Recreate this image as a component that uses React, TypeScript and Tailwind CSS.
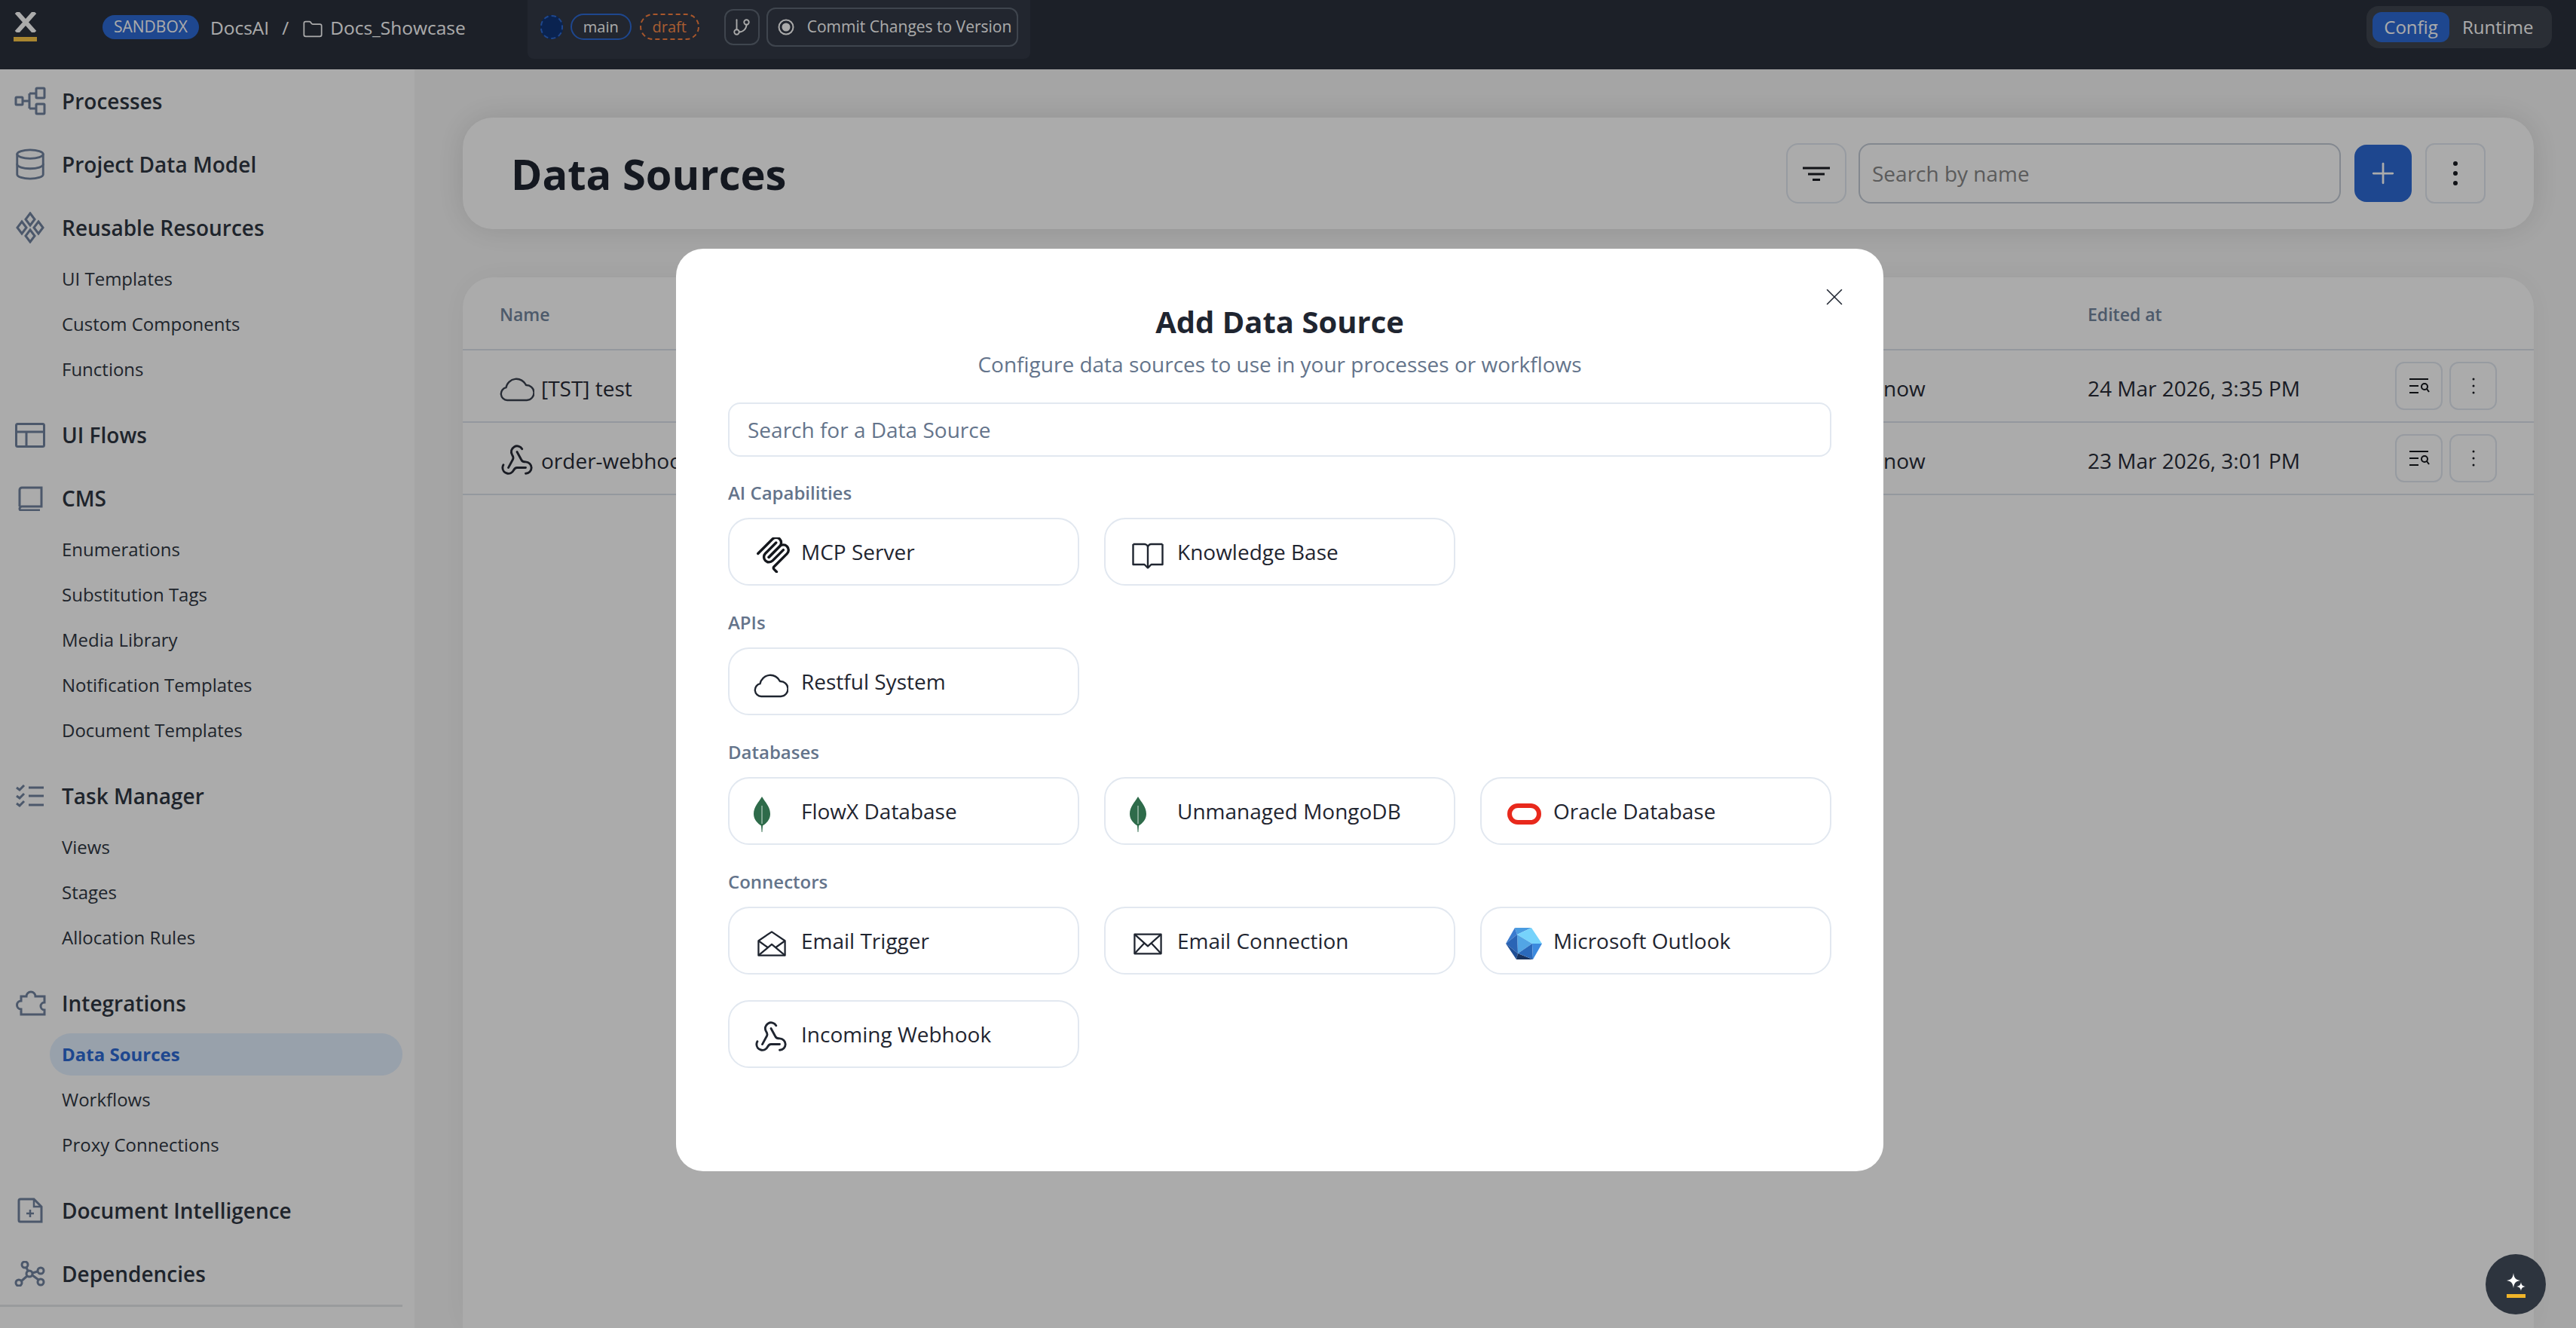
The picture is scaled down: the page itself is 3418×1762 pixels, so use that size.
import { Database, Folder, GitBranch, Plus, Webhook, X } from 'lucide-react';
import type { ReactNode } from 'react';

const navIcon = 'text-[#7284a0]';

function ProcessesIcon() {
  return (
    <svg width="42" height="38" viewBox="0 0 42 38" fill="none" stroke="currentColor" strokeWidth="3">
      <rect x="2" y="14" width="9" height="10" rx="1" />
      <rect x="29" y="2" width="11" height="13" rx="1" />
      <rect x="29" y="23" width="11" height="13" rx="1" />
      <path d="M11 19h9M20 9v20M20 9h9M20 29h9" />
    </svg>
  );
}

function ResourcesIcon() {
  return (
    <svg width="42" height="42" viewBox="0 0 42 42" fill="none" stroke="currentColor" strokeWidth="3">
      <path d="M21 2l6 8-6 8-6-8z" />
      <path d="M21 24l6 8-6 8-6-8z" />
      <path d="M10 13l6 8-6 8-6-8z" />
      <path d="M32 13l6 8-6 8-6-8z" />
    </svg>
  );
}

function LayoutIcon() {
  return (
    <svg width="40" height="33" viewBox="0 0 40 33" fill="none" stroke="currentColor" strokeWidth="3">
      <rect x="1.5" y="1.5" width="37" height="30" rx="2" />
      <path d="M1.5 12h37M15 12v19" />
    </svg>
  );
}

function BookIcon() {
  return (
    <svg width="34" height="33" viewBox="0 0 34 33" fill="none" stroke="currentColor" strokeWidth="3">
      <path d="M3 27V5a3 3 0 0 1 3-3h26v25H6a3 3 0 0 0-3 3 2 2 0 0 0 2 2h25" />
    </svg>
  );
}

function TasksIcon() {
  return (
    <svg width="38" height="30" viewBox="0 0 38 30" fill="none" stroke="currentColor" strokeWidth="3">
      <path d="M1 4l4 3 6-6M1 15l4 3 6-6M1 25l4 3 6-6" />
      <path d="M17 4h20M17 15h20M17 27h20" />
    </svg>
  );
}

function PuzzleIcon() {
  return (
    <svg width="42" height="34" viewBox="0 0 42 34" fill="none" stroke="currentColor" strokeWidth="3">
      <path d="M9 32h31v-6a5 5 0 0 1 0-10V8H28a6 6 0 1 0-12 0H9v6a5.5 5.5 0 0 0 0 11z" />
    </svg>
  );
}

function DocPlusIcon() {
  return (
    <svg width="34" height="34" viewBox="0 0 34 34" fill="none" stroke="currentColor" strokeWidth="3">
      <path d="M4 2h18l10 10v20H4a2 2 0 0 1-2-2V4a2 2 0 0 1 2-2z" />
      <path d="M22 2v10h10M17 16v10M12 21h10" strokeWidth="2.5" />
    </svg>
  );
}

function NetworkIcon() {
  return (
    <svg width="42" height="34" viewBox="0 0 42 34" fill="none" stroke="currentColor" strokeWidth="3">
      <circle cx="14" cy="5" r="4" />
      <circle cx="20" cy="17" r="4" />
      <circle cx="35" cy="13" r="4" />
      <circle cx="35" cy="28" r="4" />
      <circle cx="6" cy="29" r="4" />
      <path d="M16 9l2 4M24 16l7-2M24 19l8 6M9 27l8-7" />
    </svg>
  );
}

function CloudIcon({ color }: { color: string }) {
  return (
    <svg width="46" height="35" viewBox="0 0 46 35" fill="none" stroke={color} strokeWidth="2.4" strokeLinejoin="round">
      <path d="M10 33a8.500 8.500 0 0 1-1.500-16.800A14 14 0 0 1 35 13a10 10 0 0 1 1 20z" />
    </svg>
  );
}

function McpIcon() {
  return (
    <svg className="ml-[2px]" width="46" height="47" viewBox="18 22 150 166" fill="none" stroke="#14171c" strokeWidth="12" strokeLinecap="round">
      <path d="M25 97.8528L92.8822 29.9706C102.255 20.598 117.451 20.598 126.823 29.9706C136.196 39.3431 136.196 54.5391 126.823 63.9117L75.5581 115.177" />
      <path d="M76.2652 114.47L126.823 63.9117C136.196 54.5391 151.392 54.5391 160.765 63.9117L161.118 64.2652C170.491 73.6378 170.491 88.8338 161.118 98.2063L99.7248 159.6C96.6006 162.724 96.6006 167.789 99.7248 170.913L112.331 183.52" />
      <path d="M109.853 46.9411L59.6482 97.1457C50.2756 106.518 50.2756 121.714 59.6482 131.087C69.0208 140.459 84.2167 140.459 93.5893 131.087L143.794 80.8822" />
    </svg>
  );
}

function KnowledgeIcon() {
  return (
    <svg className="ml-[3px] mt-[3px]" width="42" height="35" viewBox="0 0 42 35" fill="none" stroke="#1f2530" strokeWidth="2.4" strokeLinejoin="round">
      <path d="M1.5 2h15a4.5 4.5 0 0 1 4.5 4.5V34M40.5 2h-15A4.5 4.5 0 0 0 21 6.5" />
      <path d="M1.5 2v27h15l4.5 4.5 4.5-4.5h15V2" />
    </svg>
  );
}

function LeafIcon() {
  return (
    <svg width="22" height="47" viewBox="0 0 22 47">
      <path d="M11 0C15 7 22 13 22 23c0 8-6 13-10 15.500L11.400 47h-.8L10 38.500C6 36 0 31 0 23 0 13 7 7 11 0z" fill="#2e6b4a" />
      <path d="M11 12v24" stroke="#cfe2d6" strokeWidth="1" />
    </svg>
  );
}

function OracleIcon() {
  return (
    <svg className="ml-[2px]" width="45" height="28" viewBox="0 0 45 28" fill="none">
      <rect x="3" y="3" width="39" height="22" rx="11" stroke="#e8291c" strokeWidth="6" />
    </svg>
  );
}

function OutlookIcon() {
  return (
    <svg width="48" height="42" viewBox="0 0 48 42">
      <polygon points="12,0 34,0 15,9" fill="#4a9be0" />
      <polygon points="34,0 48,21 35,21 15,9" fill="#76d3fb" />
      <polygon points="15,9 35,21 16,34" fill="#52a5e5" />
      <polygon points="12,0 15,9 0,21" fill="#3a7bcf" />
      <polygon points="0,21 15,9 16,34" fill="#2a64b5" />
      <polygon points="0,21 16,34 14,42" fill="#1f4f96" />
      <polygon points="14,42 16,34 36,42" fill="#17325f" />
      <polygon points="16,34 35,21 36,42" fill="#2a69bb" />
      <polygon points="35,21 48,21 36,42" fill="#3c8ade" />
    </svg>
  );
}

function MailOpenIcon() {
  return (
    <svg className="ml-[5px]" width="38" height="36" viewBox="0 0 40 36" fill="none" stroke="#1f2530" strokeWidth="2.4" strokeLinejoin="round">
      <path d="M1.500 14L20 1.500 38.500 14v20.500h-37z" />
      <path d="M1.500 14L14 23M38.500 14L26 23M1.500 34.500L20 19l18.500 15.500" />
    </svg>
  );
}

function MailIcon() {
  return (
    <svg className="ml-[5px]" width="38" height="29" viewBox="0 0 40 30" fill="none" stroke="#1f2530" strokeWidth="2.4" strokeLinejoin="round">
      <rect x="1.500" y="1.500" width="37" height="27" />
      <path d="M1.500 1.500L20 18 38.500 1.500M1.500 28.500L15 14M38.500 28.500L25 14" />
    </svg>
  );
}

function RowSearchIcon() {
  return (
    <svg width="28" height="22" viewBox="0 0 28 22" fill="none" stroke="#14171c" strokeWidth="2">
      <path d="M1 2h25M1 11h12M1 20h12" />
      <circle cx="21" cy="12" r="4" />
      <path d="M24 15l3 4" />
    </svg>
  );
}

function Dots({ r, step }: { r: number; step: number }) {
  return (
    <svg width="12" height="40" viewBox="0 0 12 40" fill="#1a1d23">
      <circle cx="6" cy={20 - step} r={r} />
      <circle cx="6" cy="20" r={r} />
      <circle cx="6" cy={20 + step} r={r} />
    </svg>
  );
}

function Section({ icon, label, items }: { icon: ReactNode; label: string; items?: string[] }) {
  return (
    <div className={items ? 'mb-[3px]' : ''}>
      <div className="flex h-[60px] items-center">
        <div className={`flex w-[82px] shrink-0 justify-center pr-[2px] ${navIcon}`}>{icon}</div>
        <span className="text-[28px] font-semibold text-[#2f3642]">{label}</span>
      </div>
      {items && (
        <div className="mt-2">
          {items.map((item) => (
            <div key={item} className="relative flex h-[60px] items-center pl-[82px]">
              {item === 'Data Sources' ? (
                <div className="-ml-4 flex h-[56px] w-[468px] items-center rounded-[28px] bg-[#e3f0ff] pl-4 text-[24px] font-bold text-[#2d6ad5]">
                  {item}
                </div>
              ) : (
                <span className="text-[24px] text-[#2f3642]">{item}</span>
              )}
            </div>
          ))}
        </div>
      )}
    </div>
  );
}

function Sidebar() {
  return (
    <aside className="flex w-[550px] shrink-0 flex-col gap-6 bg-white pt-[12px]">
      <Section icon={<ProcessesIcon />} label="Processes" />
      <Section icon={<Database size={46} strokeWidth={1.5} />} label="Project Data Model" />
      <Section icon={<ResourcesIcon />} label="Reusable Resources" items={['UI Templates', 'Custom Components', 'Functions']} />
      <Section icon={<LayoutIcon />} label="UI Flows" />
      <Section icon={<BookIcon />} label="CMS" items={['Enumerations', 'Substitution Tags', 'Media Library', 'Notification Templates', 'Document Templates']} />
      <Section icon={<TasksIcon />} label="Task Manager" items={['Views', 'Stages', 'Allocation Rules']} />
      <Section icon={<PuzzleIcon />} label="Integrations" items={['Data Sources', 'Workflows', 'Proxy Connections']} />
      <Section icon={<DocPlusIcon />} label="Document Intelligence" />
      <Section icon={<NetworkIcon />} label="Dependencies" />
      <div className="-mt-[13px] h-[3px] w-[534px] bg-[#e5e7eb]" />
    </aside>
  );
}

function TopBar() {
  return (
    <header className="flex h-[92px] items-start bg-[#2a303d] text-white">
      <div className="ml-[18px] mt-4 flex w-[31px] flex-col items-center">
        <svg width="30" height="27" viewBox="0 0 30 27" stroke="#fff" strokeWidth="6">
          <path d="M3 0l24 27M27 0L3 27" />
        </svg>
        <div className="mt-[6px] h-[6px] w-[31px] bg-[#fbc748]" />
      </div>
      <div className="ml-[87px] mt-5 flex h-8 items-center rounded-full bg-[#2d6ad5] px-[15px] text-[21px]">SANDBOX</div>
      <div className="ml-[15px] mt-[19px] text-[24.500px]">DocsAI</div>
      <div className="ml-[17px] mt-[19px] text-[24.500px]">/</div>
      <Folder className="ml-[18px] mt-[25px]" size={28} strokeWidth={1.5} />
      <div className="ml-[9px] mt-[19px] text-[24.500px]">Docs_Showcase</div>

      <div className="ml-[82px] flex h-[78px] w-[667px] items-start rounded-b-lg bg-[#333946] pl-[17px]">
        <div className="mt-5 h-8 w-[30px] rounded-full border-2 border-dashed border-[#2d6ad5] bg-[#0f3578]" />
        <div className="ml-[10px] mt-[18px] flex h-[35px] w-[81px] items-center justify-center rounded-full border-2 border-[#2d6ad5] text-[20px]">main</div>
        <div className="ml-[11px] mt-[18px] flex h-[35px] w-[79px] items-center justify-center rounded-full border-2 border-dashed border-[#fb8240] text-[20px] text-[#fb8c4a]">draft</div>
        <div className="ml-[33px] mt-3 flex h-12 w-[47px] items-center justify-center rounded-xl border-2 border-[#5f6875]">
          <GitBranch size={26} strokeWidth={1.7} />
        </div>
        <div className="ml-[9px] mt-[10px] flex h-[52px] w-[334px] items-center rounded-xl border-2 border-[#5f6875] pl-[13px] text-[21px]">
          <svg width="22" height="22" viewBox="0 0 22 22" fill="none" stroke="currentColor" strokeWidth="2">
            <circle cx="11" cy="11" r="9.500" />
            <circle cx="11" cy="11" r="4.500" fill="currentColor" />
          </svg>
          <span className="ml-[17px]">Commit Changes to Version</span>
        </div>
      </div>

      <div className="ml-auto mr-8 mt-2 flex h-14 w-[246px] items-center rounded-2xl bg-[#3f454f] pl-2 text-[24px]">
        <div className="flex h-10 w-[102px] items-center justify-center rounded-xl bg-[#2d6ad5]">Config</div>
        <div className="ml-[17px]">Runtime</div>
      </div>
    </header>
  );
}

const rows = [
  { name: '[TST] test', icon: <CloudIcon color="#3b4250" />, date: '24 Mar 2026, 3:35 PM' },
  { name: 'order-webhook', icon: <Webhook size={46} strokeWidth={1.5} />, date: '23 Mar 2026, 3:01 PM' },
];

function Content() {
  return (
    <main className="flex min-w-0 flex-1 flex-col gap-16 overflow-hidden bg-[#f7f7f7] pl-16 pr-14 pt-16">
      <section className="flex h-[148px] shrink-0 items-center justify-between rounded-[40px] bg-white pl-16 pr-16 shadow-[0_0_40px_rgba(0,0,0,0.12)]">
        <h1 className="text-[56px] font-bold text-[#1f2430]">Data Sources</h1>
        <div className="flex items-center">
          <div className="flex h-[80px] w-[80px] items-center justify-center rounded-2xl border-2 border-[#e2e8f0]">
            <svg width="36" height="19" viewBox="0 0 36 19" stroke="#1a1d23" strokeWidth="3">
              <path d="M0 2h36M7 10h22M13 17.500h10" />
            </svg>
          </div>
          <div className="ml-4 flex h-[80px] w-[640px] items-center rounded-2xl border-2 border-[#c3cbd6] pl-4 text-[28px] text-[#888888]">Search by name</div>
          <div className="ml-[18px] flex h-[76px] w-[76px] items-center justify-center rounded-2xl bg-[#2d6ad5] text-white">
            <Plus size={44} strokeWidth={1.5} />
          </div>
          <div className="ml-[18px] flex h-[80px] w-[80px] items-center justify-center rounded-xl border-2 border-[#e2e8f0]">
            <Dots r={3} step={13} />
          </div>
        </div>
      </section>

      <section className="min-h-0 flex-1 rounded-t-[40px] bg-white shadow-[0_0_40px_rgba(0,0,0,0.05)]">
        <div className="flex h-[97px] items-center border-b-2 border-[#dde3ec] pl-[49px] pt-1 text-[23px] font-semibold text-[#73869f]">
          <div className="w-[2107px]">Name</div>
          <div>Edited at</div>
        </div>
        {rows.map((row) => (
          <div key={row.name} className="flex h-[96px] items-center border-b-2 border-[#dde3ec] pl-[49px] text-[28px] text-[#272b36]">
            <div className="flex w-[1836px] items-center gap-[9px] pt-[6px]">
              {row.icon}
              <span>{row.name}</span>
            </div>
            <div className="w-[271px] pt-[6px]">now</div>
            <div className="w-[408px] pt-[6px]">{row.date}</div>
            <div className="flex h-16 w-[63px] items-center justify-center rounded-xl border-2 border-[#e2e8f0]">
              <RowSearchIcon />
            </div>
            <div className="ml-[9px] flex h-16 w-[63px] items-center justify-center rounded-xl border-2 border-[#e2e8f0]">
              <Dots r={1.5} step={9} />
            </div>
          </div>
        ))}
      </section>
    </main>
  );
}

const groups: { title: string; items: { name: string; icon: ReactNode }[] }[] = [
  {
    title: 'AI Capabilities',
    items: [
      { name: 'MCP Server', icon: <McpIcon /> },
      { name: 'Knowledge Base', icon: <KnowledgeIcon /> },
    ],
  },
  {
    title: 'APIs',
    items: [{ name: 'Restful System', icon: <CloudIcon color="#1f2530" /> }],
  },
  {
    title: 'Databases',
    items: [
      { name: 'FlowX Database', icon: <LeafIcon /> },
      { name: 'Unmanaged MongoDB', icon: <LeafIcon /> },
      { name: 'Oracle Database', icon: <OracleIcon /> },
    ],
  },
  {
    title: 'Connectors',
    items: [
      { name: 'Email Trigger', icon: <MailOpenIcon /> },
      { name: 'Email Connection', icon: <MailIcon /> },
      { name: 'Microsoft Outlook', icon: <OutlookIcon /> },
      { name: 'Incoming Webhook', icon: <Webhook size={46} strokeWidth={1.5} color="#1f2530" /> },
    ],
  },
];

function AddDataSourceModal() {
  return (
    <div className="absolute left-[897px] top-[330px] h-[1224px] w-[1602px] rounded-[36px] bg-white px-[69px] pt-[77px]">
      <X className="absolute right-[46px] top-[45px] text-[#1f2530]" size={38} strokeWidth={1} />
      <h2 className="text-center text-[40px] font-bold leading-[40px] text-[#1f2530]">Add Data Source</h2>
      <p className="mt-[16px] text-center text-[28px] leading-[40px] text-[#64748b]">Configure data sources to use in your processes or workflows</p>
      <div className="mt-[31px] flex h-[72px] items-center rounded-2xl border-2 border-[#e2e8f0] pl-[24px] text-[28px] text-[#64748b]">
        Search for a Data Source
      </div>
      <div className="mt-[31px] flex flex-col gap-8">
        {groups.map((group) => (
          <div key={group.title}>
            <div className="mb-4 h-[34px] text-[24px] font-semibold leading-[34px] text-[#64748b]">{group.title}</div>
            <div className="grid grid-cols-3 gap-x-[33px] gap-y-[34px]">
              {group.items.map((item) => (
                <div key={item.name} className="flex h-[90px] items-center rounded-[28px] border-2 border-[#e2e8f0] pl-[32px]">
                  <div className="flex w-[63px] shrink-0 items-center pt-2">{item.icon}</div>
                  <span className="text-[28px] text-[#1f2530]">{item.name}</span>
                </div>
              ))}
            </div>
          </div>
        ))}
      </div>
    </div>
  );
}

export default function App() {
  return (
    <div className="relative flex h-screen w-full flex-col overflow-hidden font-['Open_Sans',sans-serif]">
      <TopBar />
      <div className="flex min-h-0 flex-1">
        <Sidebar />
        <Content />
      </div>
      <div className="absolute inset-0 bg-black/33" />
      <AddDataSourceModal />
      <div className="absolute right-10 top-[1664px] flex h-20 w-20 flex-col items-center justify-center rounded-full bg-[#2d343e]">
        <svg width="34" height="30" viewBox="0 0 34 30" fill="#fff">
          <path d="M14 2c1 7 3 9 9 10-6 1-8 3-9 10-1-7-3-9-9-10 6-1 8-3 9-10z" />
          <path d="M24 14c.6 4 2 5.400 6 6-4 .6-5.400 2-6 6-.6-4-2-5.400-6-6 4-.6 5.400-2 6-6z" />
        </svg>
        <div className="h-[5px] w-[25px] bg-[#f0b429]" />
      </div>
    </div>
  );
}
